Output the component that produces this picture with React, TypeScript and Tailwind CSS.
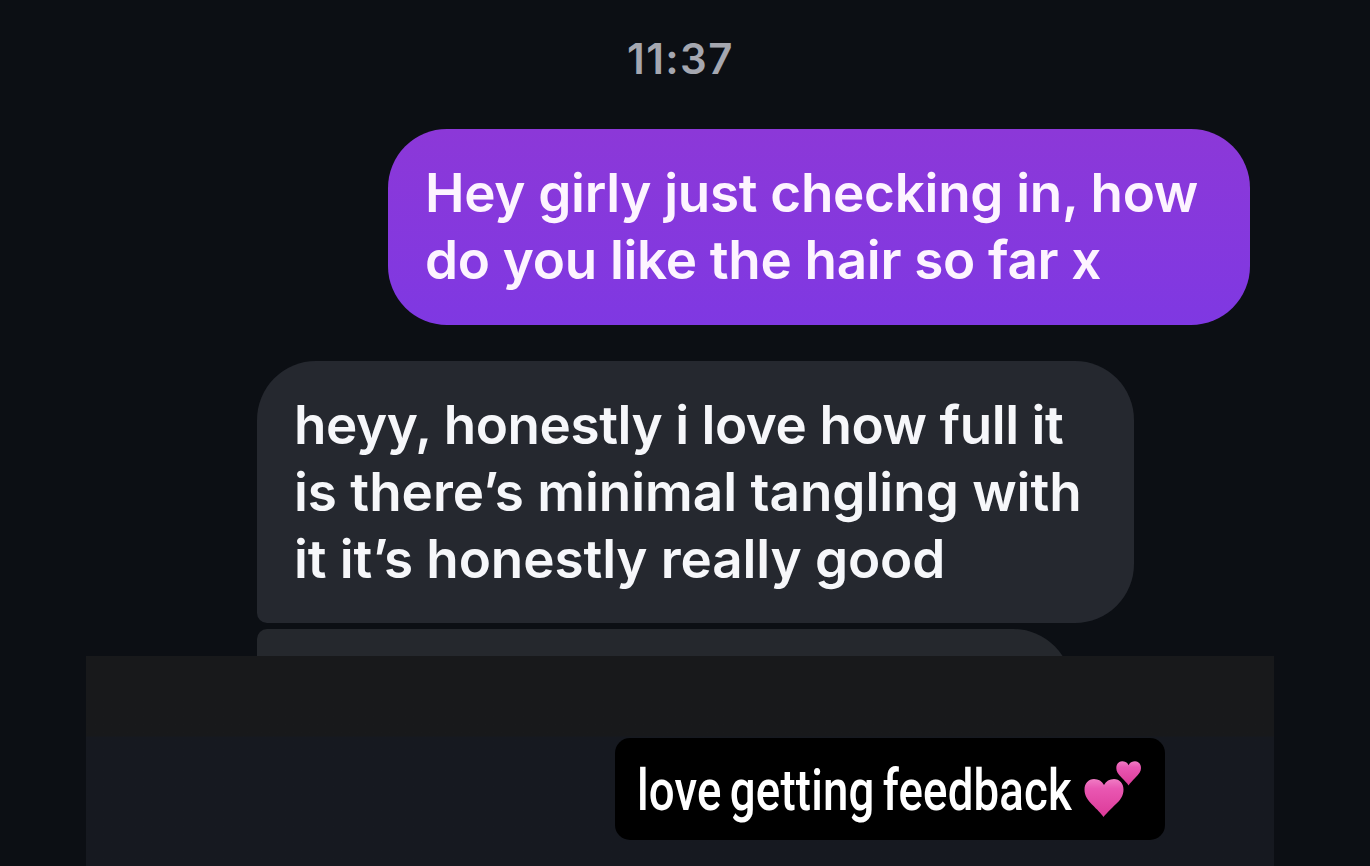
import * as React from 'react';
import { clsx } from 'clsx';

type Line = {
  text: string;
  tracking: string;
};

type BubbleProps = {
  lines: Line[];
  className?: string;
};

const SENT: Line[] = [
  { text: 'Hey girly just checking in, how', tracking: 'tracking-[-0.29px]' },
  { text: 'do you like the hair so far x', tracking: 'tracking-[-0.3px]' },
];

const RECEIVED: Line[] = [
  { text: 'heyy, honestly i love how full it', tracking: 'tracking-[-0.42px]' },
  { text: 'is there’s minimal tangling with', tracking: 'tracking-[0px]' },
  { text: 'it it’s honestly really good', tracking: 'tracking-[-0.1px]' },
];

function Bubble({ lines, className }: BubbleProps) {
  return (
    <div className={clsx('text-[53px] leading-[67px] font-semibold whitespace-nowrap', className)}>
      {lines.map((line) => (
        <p key={line.text} className="flex">
          <span className={line.tracking}>{line.text}</span>
        </p>
      ))}
    </div>
  );
}

function TwoHearts() {
  return (
    <svg viewBox="0 0 58 58" className="h-[58px] w-[58px] shrink-0" aria-hidden="true">
      <defs>
        <linearGradient id="heart" x1="0" y1="0" x2="0" y2="1">
          <stop offset="0" stopColor="#f07cc4" />
          <stop offset="0.25" stopColor="#e957b2" />
          <stop offset="1" stopColor="#dc3a98" />
        </linearGradient>
      </defs>
      <path
        fill="url(#heart)"
        d="M19.500 56C17.500 53 13 48.500 8 43.500C3.500 39 0.500 34.500 0.500 28.500C0.500 22.500 4.500 18 10 18C14.500 18 18 20 20 24C22 20 25.500 18 30 18C35.500 18 39.500 22.500 39.500 28.500C39.500 34.500 36.500 39 32 43C27 48 21.500 53 19.500 56Z"
      />
      <path
        fill="url(#heart)"
        d="M44.500 24.500C43.500 22.500 40.500 19.500 37.500 16.500C34 13 32.300 10.500 32.300 7C32.300 3 34.700 0.200 38.200 0.200C41.200 0.200 43.500 1.500 44.500 4.200C45.800 1.500 48 0.200 51 0.200C54.500 0.200 57 3 57 7C57 10.500 55 13 51.500 16.500C48.500 19.500 45.800 22.500 44.500 24.500Z"
      />
    </svg>
  );
}

function Caption() {
  return (
    <div className="ml-[529px] mt-[82px] flex h-[102px] w-[550px] items-start rounded-[15px] bg-black pl-[22px]">
      <span className="w-[436px] origin-left scale-x-[0.8] pt-[19px] font-[Roboto] text-[57px] leading-[67px] font-medium tracking-[0.2px] whitespace-nowrap [word-spacing:-4px]">
        love getting feedback
      </span>
      <div className="ml-[11px] mt-[23px]">
        <TwoHearts />
      </div>
    </div>
  );
}

export default function App() {
  return (
    <main className="flex h-[866px] w-[1370px] flex-col overflow-hidden bg-[#0c0f14] font-[Inter,sans-serif] text-white">
      <time className="ml-[627px] mt-[33px] h-[52px] text-[42px] leading-[52px] font-semibold tracking-[1.4px] whitespace-nowrap text-[#a5a7b0]">
        11:37
      </time>

      <Bubble
        lines={SENT}
        className="ml-[388px] mt-[44px] h-[196px] w-[862px] rounded-[59px] bg-linear-to-b from-[#8c38d8] to-[#7f38e2] pl-[37px] pt-[31px] text-[#fdf4ff]"
      />
      <Bubble
        lines={RECEIVED}
        className="ml-[257px] mt-[36px] h-[262px] w-[877px] rounded-[59px] rounded-bl-[10px] bg-[#25282f] pl-[37px] pt-[31px] text-[#f6f7fa]"
      />
      <div className="ml-[257px] mt-[6px] h-[27px] w-[815px] overflow-hidden">
        <div className="h-[130px] rounded-[59px] rounded-l-[10px] bg-[#25282d]" />
      </div>

      <section className="ml-[86px] h-[210px] w-[1188px] overflow-hidden bg-linear-to-b from-[#18191b] from-[80px] to-[#161920] to-[81px]">
        <Caption />
      </section>
    </main>
  );
}
